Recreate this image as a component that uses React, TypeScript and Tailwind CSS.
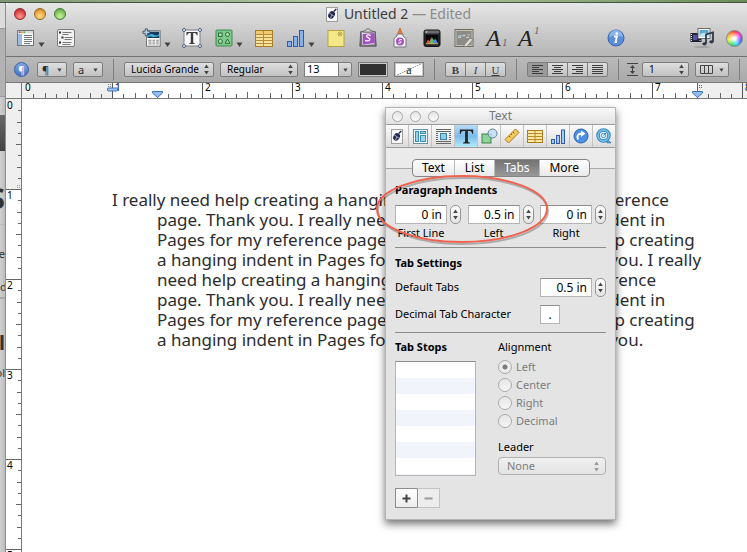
import { useState, type ReactNode } from 'react'
import clsx from 'clsx'

const LINES = [
  'I really need help creating a hanging indent in Pages for my reference',
  'page. Thank you. I really need help creating a hanging indent in',
  'Pages for my reference page. Thank you. I really need help creating',
  'a hanging indent in Pages for my reference page. Thank you. I really',
  'need help creating a hanging indent in Pages for my reference',
  'page. Thank you. I really need help creating a hanging indent in',
  'Pages for my reference page. Thank you. I really need help creating',
  'a hanging indent in Pages for my reference page. Thank you.',
]

// ---------------------------------------------------------------- icons

function PenIcon({ className }: { className?: string }) {
  return (
    <svg viewBox="0 0 14 17" className={className} aria-hidden="true">
      <rect x="0.5" y="0.5" width="13" height="16" fill="#fbfbfb" stroke="#8d8d8d" />
      <ellipse cx="6.5" cy="9" rx="3.6" ry="4.6" transform="rotate(32 6.5 9)" fill="#23284f" />
      <path d="M3 6l7 5M5 13l2-4" stroke="#c7cbe0" strokeWidth="0.9" />
      <path d="M9 5l3-3" stroke="#23284f" strokeWidth="1.6" />
    </svg>
  )
}

function ViewIcon() {
  return (
    <svg width="20" height="20" viewBox="0 0 20 20" aria-hidden="true">
      <rect x="1.5" y="2.5" width="16" height="15" fill="#fafafa" stroke="#6f757d" />
      <rect x="2" y="3" width="15" height="2.5" fill="#d9dbdd" />
      <circle cx="3.8" cy="4.2" r="0.9" fill="#d8352e" />
      <circle cx="6" cy="4.2" r="0.9" fill="#e39b29" />
      <circle cx="8.2" cy="4.2" r="0.9" fill="#4ba943" />
      <rect x="2" y="6" width="4" height="11" fill="#9dbbe3" />
      <path d="M8 7.5h8M8 9.5h8M8 11.5h8M8 13.5h8M8 15.5h6" stroke="#74777b" />
    </svg>
  )
}

function OutlineIcon() {
  return (
    <svg width="20" height="20" viewBox="0 0 20 20" aria-hidden="true">
      <rect x="1.5" y="1.5" width="17" height="17" rx="1.5" fill="#f1f1f1" stroke="#7c7c7c" />
      <path d="M6.5 4.5h9M6.5 6.5h6M8.5 9.5h8M8.5 11.5h7M6.5 14.5h9M6.5 16.5h8" stroke="#7a7a7a" />
      <path d="M3 4.5h2M5.5 9.5h2M3 14.5h2" stroke="#2e2e2e" strokeWidth="2" />
    </svg>
  )
}

function SectionIcon() {
  return (
    <svg width="22" height="22" viewBox="0 0 22 22" aria-hidden="true">
      <rect x="5" y="3" width="15" height="17" fill="#fcfcfc" stroke="#6d6d6d" />
      <rect x="6" y="4" width="13" height="7" fill="#123a5e" />
      <path d="M6 8.500q4-3 7-1t6-1v2q-5 2-8 1t-5 1z" fill="#46b5dd" />
      <path d="M7 13.500h3.500M11.500 13.500h3M15.500 13.500h3M7 15.500h3.500M11.500 15.500h3M15.500 15.500h3M7 17.500h3.500M11.500 17.500h3M15.500 17.500h3" stroke="#7b7b7b" />
      <path d="M3.500 1h2.500v2.500h2.500v2.500h-2.500v2.500h-2.500v-2.500h-2.500v-2.500h2.500z" fill="#b9cfe2" stroke="#40566b" />
    </svg>
  )
}

function TextBoxIcon() {
  return (
    <svg width="20" height="20" viewBox="0 0 20 20" aria-hidden="true">
      <rect x="2" y="2" width="16" height="16" fill="#f8f8f8" stroke="#777f8c" />
      <path d="M4.500 4h11v3.600h-.7q-.3-2.600-2-2.600h-1.600v9.300q0 .9 1.500.9v.8h-5.400v-.8q1.500 0 1.500-.9v-9.300h-1.600q-1.700 0-2 2.600h-.7z" fill="#3b3b3b" />
      {[2, 18].map((x) =>
        [2, 18].map((y) => <circle key={`${x}-${y}`} cx={x} cy={y} r="1.500" fill="#fff" stroke="#44567c" />),
      )}
    </svg>
  )
}

function ShapesIcon() {
  return (
    <svg width="20" height="20" viewBox="0 0 20 20" aria-hidden="true">
      <rect x="2" y="2" width="16" height="16" rx="1" fill="#7fc98a" stroke="#3f8a50" />
      <g fill="#a9dfae" stroke="#2f6b3e">
        <rect x="4.500" y="5" width="3.500" height="3.500" />
        <circle cx="13.500" cy="6.500" r="2" />
        <path d="M6.300 11l2.200 1.700-.8 2.600h-2.800l-.8-2.600z" />
        <path d="M13.500 11l2.300 4.300h-4.600z" />
      </g>
    </svg>
  )
}

function TableIcon() {
  return (
    <svg width="20" height="20" viewBox="0 0 20 20" aria-hidden="true">
      <rect x="1.500" y="2.500" width="17" height="16" fill="#f8e29a" stroke="#a97c23" />
      <rect x="2" y="3" width="16" height="3" fill="#eec970" />
      <path d="M1.500 6.500h17M1.500 9.500h17M1.500 12.500h17M1.500 15.500h17M9.500 2.500v16" stroke="#b58d3a" />
    </svg>
  )
}

function ChartIcon() {
  return (
    <svg width="20" height="20" viewBox="0 0 20 20" aria-hidden="true">
      <g fill="#86b1ea" stroke="#2c5cab">
        <rect x="1.500" y="13.500" width="4" height="5" />
        <rect x="7.500" y="8.500" width="4" height="10" />
        <rect x="13.500" y="2.500" width="4" height="16" />
      </g>
    </svg>
  )
}

function NoteIcon() {
  return (
    <svg width="20" height="20" viewBox="0 0 20 20" aria-hidden="true">
      <rect x="2" y="2.500" width="16" height="16" fill="#f4e987" stroke="#b3a43f" />
      <circle cx="14" cy="6" r="2" fill="#fbf5b5" stroke="#a5932c" strokeWidth="0.800" />
      <path d="M12.800 4.800l2.400 2.400M15.200 4.800l-2.400 2.400" stroke="#a5932c" strokeWidth="0.700" />
    </svg>
  )
}

function ClipboardIcon() {
  return (
    <svg width="22" height="22" viewBox="0 0 22 22" aria-hidden="true">
      <path d="M3 4h16l1 16h-18z" fill="#76747b" stroke="#55535a" />
      <path d="M4 5h14v13l-13 1z" fill="#e9e6ec" />
      <path d="M5 6.500l13-1 .5 11-13 2z" fill="#a452c2" />
      <path d="M14 8.500q-4-2-4.500.5c0 2 4 1.500 3.500 4q-1 2-5 .5" fill="none" stroke="#fff" strokeWidth="1.500" />
      <path d="M6 4.500v-1.500h2.500l1-2h3l1 2h2.500v1.500z" fill="#d9d9d9" stroke="#6c6c6c" />
    </svg>
  )
}

function GlueIcon() {
  return (
    <svg width="20" height="22" viewBox="0 0 20 22" aria-hidden="true">
      <path d="M10 1l2.300 6h-4.600z" fill="#ee8132" stroke="#b9560f" strokeWidth="0.700" />
      <path d="M7 7h6v2l3 2.500v8.500h-12v-8.500l3-2.500z" fill="#f3f1f5" stroke="#77747b" />
      <circle cx="10" cy="14.500" r="4" fill="#a452c2" />
      <path d="M12 12.800q-3-1.200-3 .4c0 1.300 2.400.9 2 2.400q-.6 1-3 .4" fill="none" stroke="#fff" />
    </svg>
  )
}

function AdjustIcon() {
  return (
    <svg width="20" height="20" viewBox="0 0 20 20" aria-hidden="true">
      <rect x="2" y="2" width="16" height="16.500" rx="2" fill="#26262a" stroke="#131315" />
      <rect x="2.500" y="2.500" width="15" height="3" rx="1.500" fill="#6b6b70" />
      <circle cx="4.500" cy="4" r="0.800" fill="#e5e5e5" />
      <rect x="4" y="7" width="12" height="9" fill="#08080a" />
      <path d="M4 15.500l2-4 1.500 2 2-5v7z" fill="#e2504b" />
      <path d="M7 15.500l3-6 2 3 1 3z" fill="#59c05c" />
      <path d="M10.500 15.500l2.500-5 1.500 2 1.500 3z" fill="#4f86e6" />
      <path d="M4 15.700h12" stroke="#f1d25c" strokeWidth="0.800" />
    </svg>
  )
}

function AlphaIcon() {
  return (
    <svg width="20" height="20" viewBox="0 0 20 20" className="shrink-0" aria-hidden="true">
      <rect x="1" y="1.500" width="18" height="17" fill="#8b8b88" stroke="#6f6d68" />
      <rect x="2" y="2.500" width="16" height="15" fill="none" stroke="#c4bda8" />
      <text x="4" y="10" fontFamily="Liberation Serif, serif" fontStyle="italic" fontSize="7" fill="#ececec">a+2</text>
      <path d="M10 17l6-7 3 1.500-6 7h-3z" fill="#dedcd2" stroke="#77756c" strokeWidth="0.800" />
    </svg>
  )
}

function InfoIcon() {
  return (
    <svg width="20" height="20" viewBox="0 0 20 20" aria-hidden="true">
      <circle cx="10" cy="10" r="8" fill="#5a8fd8" stroke="#3464ae" />
      <path d="M3 9a7 7 0 0 1 14 0q-7-3-14 0z" fill="#8db5ea" />
      <path d="M8 8.500h3l-1.500 5.500h1.500" fill="none" stroke="#fff" strokeWidth="1.800" />
      <circle cx="10.800" cy="5.600" r="1.300" fill="#fff" />
    </svg>
  )
}

function MediaIcon() {
  return (
    <svg width="24" height="20" viewBox="0 0 24 20" className="shrink-0" aria-hidden="true">
      <ellipse cx="12" cy="19" rx="9" ry="0.800" fill="#999" />
      <rect x="0.500" y="5" width="11" height="9" fill="#1f2433" />
      <path d="M1.500 6v8M10 6v8" stroke="#e4e4e4" strokeDasharray="1 1" />
      <rect x="3" y="7" width="4" height="5" fill="#5c50a8" />
      <rect x="8" y="0.500" width="12" height="10" fill="#fff" stroke="#6b6b6b" />
      <rect x="9.500" y="2" width="9" height="7" fill="#5aa9d2" />
      <path d="M9.500 7q4-4 9-1v3h-9z" fill="#c3e4ee" />
      <path d="M16 15.500v-9l7-2v9" fill="none" stroke="#30384a" strokeWidth="1.800" />
      <ellipse cx="14.500" cy="15.800" rx="2.200" ry="1.600" fill="#30384a" />
      <ellipse cx="21.500" cy="13.800" rx="2.200" ry="1.600" fill="#30384a" />
    </svg>
  )
}

function StyleA({ superscript = false }: { superscript?: boolean }) {
  return (
    <span className="relative block h-5 w-5 text-left font-['Liberation_Serif',serif] text-[24px] leading-5 text-[#222] italic">
      A
      <span className={clsx('absolute left-4 text-[11px] leading-3 text-[#666]', superscript ? '-top-1' : 'top-2')}>1</span>
    </span>
  )
}

function UpDown({ className }: { className?: string }) {
  return (
    <svg width="7" height="11" viewBox="0 0 7 11" className={className} aria-hidden="true">
      <path d="M3.500 0.500l2.300 3.500h-4.600zM3.500 10.500l2.300-3.500h-4.600z" fill="currentColor" />
    </svg>
  )
}

function Down({ className }: { className?: string }) {
  return (
    <svg width="7" height="5" viewBox="0 0 7 5" className={className} aria-hidden="true">
      <path d="M0.500 0.500h6l-3 4.500z" fill="currentColor" />
    </svg>
  )
}

// -------------------------------------------------------------- toolbar

interface ToolProps {
  label: string
  menu?: boolean
  children: ReactNode
}

function Tool({ label, menu = false, children }: ToolProps) {
  return (
    <button type="button" aria-label={label} className={clsx('flex h-6 shrink-0 items-center', menu ? 'w-10' : 'w-8')}>
      <span className="flex w-5 shrink-0 justify-center">{children}</span>
      {menu && <Down className="mt-3 ml-[2px] text-[#444]" />}
    </button>
  )
}

function TitleBar() {
  const lights = [
    'bg-[radial-gradient(circle_at_50%_75%,#ff9c94,#dc4343_60%,#a12727)] border-[#8f2a2a]',
    'bg-[radial-gradient(circle_at_50%_75%,#ffe08c,#e8a33c_60%,#b9741c)] border-[#96661f]',
    'bg-[radial-gradient(circle_at_50%_75%,#cdf3a0,#7fc25a_60%,#4b8a34)] border-[#4a7c36]',
  ]
  return (
    <div className="flex h-[22px] items-center pr-4 pl-2">
      <div className="flex gap-2">
        {lights.map((light, i) => (
          <button key={i} type="button" aria-label={['Close', 'Minimize', 'Zoom'][i]} className={clsx('h-3 w-3 rounded-full border', light)} />
        ))}
      </div>
      <h1 className="flex flex-1 items-center justify-center gap-[6px] text-[14px] leading-5 text-[#3c3c3c]">
        <PenIcon className="h-[15px] w-3" />
        <span>
          Untitled 2 <span className="text-[#8b8b8b]">— Edited</span>
        </span>
      </h1>
    </div>
  )
}

function Toolbar() {
  return (
    <div className="flex h-[31px] items-center overflow-hidden pb-[5px] pl-[10px]">
      <Tool label="View" menu><ViewIcon /></Tool>
      <Tool label="Outline"><OutlineIcon /></Tool>
      <div className="ml-[54px] flex">
        <Tool label="Sections" menu><SectionIcon /></Tool>
        <Tool label="Text Box"><TextBoxIcon /></Tool>
        <Tool label="Shapes" menu><ShapesIcon /></Tool>
        <Tool label="Table"><TableIcon /></Tool>
        <Tool label="Charts" menu><ChartIcon /></Tool>
        <Tool label="Comment"><NoteIcon /></Tool>
        <Tool label="Copy Style"><ClipboardIcon /></Tool>
        <Tool label="Paste Style"><GlueIcon /></Tool>
        <Tool label="Adjust Image"><AdjustIcon /></Tool>
        <Tool label="Alpha"><AlphaIcon /></Tool>
        <Tool label="Subscript"><StyleA /></Tool>
        <Tool label="Superscript"><StyleA superscript /></Tool>
      </div>
      <div className="ml-14 flex">
        <Tool label="Inspector"><InfoIcon /></Tool>
      </div>
      <div className="ml-[54px] flex">
        <Tool label="Media"><MediaIcon /></Tool>
        <Tool label="Colors">
          <span className="block h-[17px] w-[17px] rounded-full border border-[#888] bg-[radial-gradient(circle,#ffffff_10%,transparent_65%),conic-gradient(#ff3b30,#ff2bd6,#5a4bff,#22c8ff,#2fe05a,#e8f23a,#ff9a2b,#ff3b30)]" />
        </Tool>
      </div>
    </div>
  )
}

const CONTROL = 'h-[15px] shrink-0 rounded-[2px] border border-[#7d7d7d] bg-linear-to-b from-[#dedede] to-[#c2c2c2]'

interface BarSelectProps {
  label: string
  value: string
  width: string
}

function BarSelect({ label, value, width }: BarSelectProps) {
  return (
    <div className={clsx('relative shrink-0', width)}>
      <select aria-label={label} className={clsx(CONTROL, 'block w-full appearance-none pl-[6px] text-[10px] leading-[13px] text-black')}>
        <option>{value}</option>
      </select>
      <UpDown className="pointer-events-none absolute top-[2px] right-1 text-[#444]" />
    </div>
  )
}

function Separator() {
  return <span className="mx-1 h-[21px] w-px shrink-0 bg-[#7f7f7f]" />
}

function AlignLines({ kind }: { kind: string }) {
  const paths: Record<string, string> = {
    Left: 'M0 .5h11M0 2.500h7M0 4.500h11M0 6.500h7M0 8.500h11',
    Center: 'M0 .5h11M2 2.500h7M0 4.500h11M2 6.500h7M0 8.500h11',
    Right: 'M0 .5h11M4 2.500h7M0 4.500h11M4 6.500h7M0 8.500h11',
    Justify: 'M0 .5h11M0 2.500h11M0 4.500h11M0 6.500h11M0 8.500h11',
  }
  return (
    <svg width="11" height="9" viewBox="0 0 11 9" aria-hidden="true">
      <path d={paths[kind]} stroke="#3d3d3d" />
    </svg>
  )
}

function FormatBar() {
  return (
    <div className="flex h-[26px] items-center gap-[6px] overflow-hidden border-t border-[#717171] bg-linear-to-b from-[#b9b9b9] to-[#a9a9a9] pl-2">
      <button type="button" aria-label="Styles drawer" className="mr-[2px] h-[15px] w-[15px] shrink-0 rounded-full border border-[#3a5fa3] bg-linear-to-b from-[#7fa6e0] to-[#4474c8] text-[10px] leading-3 text-white">
        ¶
      </button>
      {['¶', 'a'].map((glyph) => (
        <button key={glyph} type="button" className={clsx(CONTROL, 'flex w-[30px] items-center justify-between px-1 text-[11px] leading-3 text-[#2d2d2d]')}>
          {glyph}
          <Down className="h-1 w-[5px] text-[#444]" />
        </button>
      ))}
      <Separator />
      <BarSelect label="Font" value="Lucida Grande" width="w-[90px]" />
      <BarSelect label="Typeface" value="Regular" width="w-[78px]" />
      <div className="flex shrink-0">
        <input aria-label="Font size" defaultValue="13" className="h-[15px] w-[35px] border border-[#7d7d7d] bg-white px-[2px] text-[11px] text-black" />
        <button type="button" aria-label="Font sizes" className={clsx(CONTROL, '-ml-px flex w-[14px] items-center justify-center rounded-l-none')}>
          <Down className="h-1 w-[5px] text-[#444]" />
        </button>
      </div>
      <button type="button" aria-label="Text colour" className="h-[15px] w-[30px] shrink-0 border border-[#7d7d7d] bg-[#303030] outline-1 -outline-offset-2 outline-[#c9c9c9]" />
      <button type="button" aria-label="Text background" className="h-[15px] w-[30px] shrink-0 border border-[#7d7d7d] bg-[linear-gradient(155deg,#fff_48%,#999_49%,#999_51%,#fff_52%)] font-['Liberation_Serif',serif] text-[12px] leading-3 text-[#222] outline-1 -outline-offset-2 outline-[#c9c9c9]">
        a
      </button>
      <Separator />
      <div className="flex shrink-0 font-['Liberation_Serif',serif] text-[11px] leading-3 text-[#3d3d3d]">
        <button type="button" className={clsx(CONTROL, 'w-[21px] rounded-r-none font-bold')}>B</button>
        <button type="button" className={clsx(CONTROL, '-ml-px w-[21px] rounded-none italic')}>I</button>
        <button type="button" className={clsx(CONTROL, '-ml-px w-[21px] rounded-l-none underline')}>U</button>
      </div>
      <Separator />
      <div className="flex shrink-0">
        {['Left', 'Center', 'Right', 'Justify'].map((kind) => (
          <button
            key={kind}
            type="button"
            aria-label={`Align ${kind}`}
            className={clsx('-ml-px flex h-[15px] w-[21px] items-center justify-center border border-[#7d7d7d] first:ml-0 first:rounded-l-[2px] last:rounded-r-[2px]', kind === 'Left' ? 'bg-[#9a9a9a]' : 'bg-linear-to-b from-[#dedede] to-[#c2c2c2]')}
          >
            <AlignLines kind={kind} />
          </button>
        ))}
      </div>
      <Separator />
      <svg width="11" height="13" viewBox="0 0 11 13" className="-mx-[2px] shrink-0" aria-hidden="true">
        <path d="M0 .5h11M0 12.500h11M5.500 3v7" stroke="#444" />
        <path d="M5.500 2l2.500 3h-5zM5.500 11l2.500-3h-5z" fill="#444" />
      </svg>
      <BarSelect label="Line spacing" value="1" width="w-[47px]" />
      <button type="button" aria-label="Columns" className={clsx(CONTROL, 'flex w-[34px] items-center justify-between px-1')}>
        <svg width="13" height="9" viewBox="0 0 13 9" aria-hidden="true">
          <path d="M.5.5h12v8h-12zM4.500.5v8M8.500.5v8" fill="none" stroke="#444" />
        </svg>
        <Down className="h-1 w-[5px] text-[#444]" />
      </button>
      <Separator />
    </div>
  )
}

// --------------------------------------------------------------- rulers

const TICKS = [4, 5, 4, 6, 4, 5, 4]

function HorizontalRuler() {
  return (
    <div className="flex h-[17px] border-t border-b border-[#777] bg-[#efefef]">
      <div className="w-4 shrink-0 border-r border-[#777]" />
      <div className="relative flex min-w-0 flex-1 overflow-hidden bg-[linear-gradient(to_right,#efefef_90px,#fff_90px,#fff_675px,#efefef_675px)]">
        {Array.from({ length: 16 }, (_, inch) => (
          <div key={inch} className="relative h-[15px] w-[90px] shrink-0 text-[10px] leading-[9px] text-black">
            <svg width="90" height="15" className="absolute" aria-hidden="true">
              {inch > 0 && <path d="M.5 0v15" stroke="#555" />}
              {TICKS.map((h, i) => (
                <path key={i} d={`M${Math.round((i + 1) * 11.25) + 0.5} 15v-${h}`} stroke="#666" />
              ))}
            </svg>
            <span className="absolute top-0 left-[3px]">{inch}</span>
          </div>
        ))}
        <svg width="14" height="11" viewBox="0 0 14 11" className="absolute top-px left-[84px]" aria-hidden="true">
          <path d="M2 .5h1M4 .5h1M2 2.500h1M4 2.500h1" stroke="#888" />
          <rect x="1.500" y="4" width="10" height="3" rx="1" fill="#9cc6f2" stroke="#3e74b5" />
        </svg>
        {['left-[130px]', 'left-[670px]'].map((left) => (
          <svg key={left} width="11" height="15" viewBox="0 0 11 15" className={clsx('absolute top-0', left)} aria-hidden="true">
            {left === 'left-[670px]' && <path d="M5.500 0v9M7 2.500h1M9 2.500h1M7 4.500h1M9 4.500h1" stroke="#666" />}
            <path d="M.5 8.500h10v1.500l-5 4.500-5-4.500z" fill="#8fbdf0" stroke="#3e74b5" />
          </svg>
        ))}
      </div>
    </div>
  )
}

function VerticalRuler() {
  return (
    <div className="w-4 shrink-0 overflow-hidden border-r border-[#777] bg-[linear-gradient(#efefef_90px,#fff_90px)]">
      {Array.from({ length: 12 }, (_, inch) => (
        <div key={inch} className="relative h-[90px] text-[10px] leading-[9px] text-black">
          <svg width="15" height="90" className="absolute" aria-hidden="true">
            {inch > 0 && <path d="M0 .5h15" stroke="#666" />}
            {TICKS.map((w, i) => (
              <path key={i} d={`M15 ${Math.round((i + 1) * 11.25) + 0.5}h-${w - 1}`} stroke="#666" />
            ))}
            {inch === 0 && <path d="M11 86.500h1M13 86.500h1M11 88.500h1M13 88.500h1" stroke="#999" />}
          </svg>
          <span className="absolute top-[2px] left-px">{inch}</span>
        </div>
      ))}
    </div>
  )
}

// ------------------------------------------------------------ inspector

const INSPECTOR_ICONS: { label: string; icon: ReactNode }[] = [
  { label: 'Document', icon: <PenIcon className="h-[15px] w-3" /> },
  {
    label: 'Layout',
    icon: (
      <svg width="15" height="15" viewBox="0 0 15 15">
        <rect x=".5" y=".5" width="14" height="14" fill="#f4fafd" stroke="#6e8ea3" />
        <g fill="#9ad3ef" stroke="#3c8db7">
          <rect x="2.500" y="2.500" width="3" height="10" />
          <rect x="7.500" y="2.500" width="5" height="2" />
          <rect x="7.500" y="6.500" width="5" height="6" />
        </g>
      </svg>
    ),
  },
  {
    label: 'Wrap',
    icon: (
      <svg width="15" height="15" viewBox="0 0 15 15">
        <path d="M0 .5h15M0 2.500h15M0 4.500h2M0 6.500h2M0 8.500h2M0 10.500h2M13 4.500h2M13 6.500h2M13 8.500h2M13 10.500h2M0 12.500h15M0 14.500h15" stroke="#666" />
        <rect x="4.500" y="4.500" width="6" height="6" fill="#8fcbe9" stroke="#3c7fa8" />
      </svg>
    ),
  },
  {
    label: 'Text',
    icon: (
      <svg width="15" height="15" viewBox="0 0 15 15">
        <path d="M.8.500h13.400v4.500h-.8q-.6-3-2.800-3h-1.700v10.300q0 1.300 2 1.300v.9h-6.800v-.9q2 0 2-1.300v-10.300h-1.700q-2.200 0-2.800 3h-.8z" fill="#252525" />
      </svg>
    ),
  },
  {
    label: 'Graphic',
    icon: (
      <svg width="17" height="16" viewBox="0 0 17 16">
        <rect x="1" y="6" width="9" height="9" fill="#8fd29a" stroke="#3b8349" />
        <circle cx="11.500" cy="5.500" r="4.500" fill="#c3dcef" fillOpacity=".85" stroke="#5c7f9b" />
      </svg>
    ),
  },
  {
    label: 'Metrics',
    icon: (
      <svg width="16" height="16" viewBox="0 0 16 16">
        <path d="M1 11.500l10.500-10.500 3.500 3.500-10.500 10.500z" fill="#f4cd5c" stroke="#a9791d" />
        <path d="M5 8l1.500 1.500M7 6l1 1M9 4l1.500 1.500" stroke="#8a6115" />
      </svg>
    ),
  },
  {
    label: 'Table',
    icon: (
      <svg width="16" height="15" viewBox="0 0 16 15">
        <rect x=".5" y="1.500" width="15" height="12" fill="#fae7a0" stroke="#a97c23" />
        <path d="M.5 4.500h15M.5 7.500h15M.5 10.500h15M8 1.500v12" stroke="#b58a30" />
      </svg>
    ),
  },
  {
    label: 'Chart',
    icon: (
      <svg width="15" height="15" viewBox="0 0 15 15">
        <g fill="#a9c9f1" stroke="#2c5cab">
          <rect x=".5" y="10.500" width="3" height="4" />
          <rect x="5.500" y="6.500" width="3" height="8" />
          <rect x="10.500" y="1" width="3" height="13.500" />
        </g>
      </svg>
    ),
  },
  {
    label: 'Link',
    icon: (
      <svg width="16" height="16" viewBox="0 0 16 16">
        <circle cx="8" cy="8" r="7" fill="#4d8fe0" stroke="#2a5fae" />
        <path d="M5 11.500q-2-5.500 3.500-6" fill="none" stroke="#fff" strokeWidth="2" />
        <path d="M8 2.500l4.500 3-4.500 3.500z" fill="#fff" />
      </svg>
    ),
  },
  {
    label: 'QuickTime',
    icon: (
      <svg width="16" height="16" viewBox="0 0 16 16">
        <path d="M9.500 9.500l5.500 5.300h-4z" fill="#5fb2e2" stroke="#357fb5" />
        <circle cx="7.500" cy="7.500" r="5.500" fill="#e4f4fb" stroke="#357fb5" strokeWidth="3.500" />
        <circle cx="7.500" cy="7.500" r="5.500" fill="none" stroke="#6dbbe8" strokeWidth="1.800" />
        <circle cx="7.500" cy="7.500" r="2.200" fill="none" stroke="#4795c9" />
        <path d="M7.500 7.500l3-3" stroke="#357fb5" />
      </svg>
    ),
  },
]

interface FieldProps {
  label: string
  value: string
  showLabel?: boolean
}

function MeasureField({ label, value, showLabel = false }: FieldProps) {
  return (
    <div className="flex items-start gap-[3px]">
      <label className="flex flex-col items-center text-[11px] leading-[18px] text-black">
        <input aria-label={label} defaultValue={value} className="h-[19px] w-[52px] border border-[#b5b5b5] border-t-[#8e8e8e] bg-white pr-1 text-right text-[12px] leading-4" />
        {showLabel && <span>{label}</span>}
      </label>
      <button type="button" aria-label={`Adjust ${label}`} className="flex h-[19px] w-[11px] items-center justify-center rounded-[5px] border border-[#959595] bg-linear-to-b from-white to-[#e3e3e3]">
        <UpDown className="text-[#444]" />
      </button>
    </div>
  )
}

const SECTION_TITLE = 'text-[11px] leading-4 font-bold text-black'

function Inspector() {
  const [tab, setTab] = useState('Tabs')
  const [alignment, setAlignment] = useState('Left')

  return (
    <section aria-label="Text inspector" className="absolute top-2 left-[363px] w-[231px] border border-[#b4b4b4] bg-[#ebebeb] text-black shadow-[0_4px_8px_rgba(0,0,0,0.55)]">
      <header className="relative flex h-4 items-center bg-linear-to-b from-[#f8f8f8] to-[#e2e2e2] pl-[6px]">
        <div className="flex gap-[7px]">
          {['Close', 'Minimize', 'Zoom'].map((name) => (
            <button key={name} type="button" aria-label={name} className="h-[11px] w-[11px] rounded-full border border-[#a5a5a5] bg-linear-to-b from-[#e4e4e4] to-[#fafafa]" />
          ))}
        </div>
        <h2 className="absolute inset-x-0 text-center text-[12px] leading-4 text-[#777]">Text</h2>
      </header>

      <nav className="flex h-6 border-y border-[#9b9b9b] bg-linear-to-b from-[#fbfbfb] via-[#ececec] to-[#dcdcdc]">
        {INSPECTOR_ICONS.map(({ label, icon }) => (
          <button
            key={label}
            type="button"
            aria-label={`${label} inspector`}
            className={clsx('flex min-w-0 flex-1 items-center justify-center border-l border-[#c3c3c3] first:border-l-0', label === 'Text' && 'bg-linear-to-b from-[#b9dcf5] via-[#7cbcec] to-[#b4ecfb]')}
          >
            {icon}
          </button>
        ))}
      </nav>

      <div className="relative flex justify-center pt-[11px]">
        <div className="absolute inset-x-0 top-5 border-t border-[#a9a9a9]" />
        <div className="absolute inset-x-0 top-[21px] bottom-0 bg-[#e4e4e4]" />
        <div className="relative flex h-[18px] w-[178px] overflow-hidden rounded-[4px] border border-[#858585] bg-linear-to-b from-white to-[#e9e9e9] text-[12px] leading-4">
          {['Text', 'List', 'Tabs', 'More'].map((name) => (
            <button
              key={name}
              type="button"
              onClick={() => setTab(name)}
              className={clsx('flex-auto border-l border-[#bbb] first:border-l-0', tab === name && 'bg-linear-to-b from-[#747474] to-[#989898] text-white')}
            >
              {name}
            </button>
          ))}
        </div>
      </div>

      <div className="bg-[#e4e4e4] px-[9px] pt-[5px] pb-[11px]">
        <h3 className={SECTION_TITLE}>Paragraph Indents</h3>
        <div className="mt-[7px] flex justify-between">
          <MeasureField label="First Line" value="0 in" showLabel />
          <MeasureField label="Left" value="0.5 in" showLabel />
          <MeasureField label="Right" value="0 in" showLabel />
        </div>
        <hr className="mt-[5px] border-[#8b8b8b]" />

        <h3 className={clsx(SECTION_TITLE, 'mt-[7px]')}>Tab Settings</h3>
        <div className="mt-[7px] flex items-center justify-between text-[11px]">
          <span>Default Tabs</span>
          <MeasureField label="Default Tabs" value="0.5 in" />
        </div>
        <div className="mt-2 flex items-center justify-between text-[11px]">
          <label htmlFor="decimal-char">Decimal Tab Character</label>
          <input id="decimal-char" defaultValue="." className="mr-[46px] h-[19px] w-5 border border-[#b5b5b5] border-t-[#8e8e8e] bg-white text-center text-[12px]" />
        </div>
        <hr className="mt-2 border-[#8b8b8b]" />

        <div className="mt-[6px] flex justify-between">
          <div>
            <h3 className={SECTION_TITLE}>Tab Stops</h3>
            <ul aria-label="Tab stops" className="mt-[6px] h-[115px] w-[81px] border border-[#b5b5b5] border-t-[#8e8e8e] bg-[repeating-linear-gradient(#fff_0_16px,#f1f5fb_16px_32px)]" />
            <div className="mt-3 flex">
              <button type="button" aria-label="Add tab stop" className="flex h-5 w-[23px] items-center justify-center border border-[#8d8d8d] bg-linear-to-b from-white to-[#ececec]">
                <svg width="9" height="9" viewBox="0 0 9 9"><path d="M4.500.5v8M.5 4.500h8" stroke="#444" strokeWidth="2" /></svg>
              </button>
              <button type="button" aria-label="Remove tab stop" disabled className="-ml-px flex h-5 w-[23px] items-center justify-center border border-[#c3c3c3] border-l-[#8d8d8d] bg-[#ededed]">
                <svg width="9" height="9" viewBox="0 0 9 9"><path d="M.5 4.500h8" stroke="#999" strokeWidth="2" /></svg>
              </button>
            </div>
          </div>

          <div className="w-[108px] text-[11px]">
            <fieldset>
              <legend className="mb-[3px] leading-4">Alignment</legend>
              {['Left', 'Center', 'Right', 'Decimal'].map((name) => (
                <label key={name} className="flex h-[18px] items-center gap-1 text-[#7d7d7d]">
                  <input
                    type="radio"
                    name="alignment"
                    checked={alignment === name}
                    onChange={() => setAlignment(name)}
                    className="h-[14px] w-[14px] appearance-none rounded-full border border-[#a9a9a9] bg-linear-to-b from-[#e6e6e6] to-[#f5f5f5] checked:bg-[radial-gradient(circle,#7d7d7d_2px,#ededed_3px)]"
                  />
                  {name}
                </label>
              ))}
            </fieldset>
            <label htmlFor="leader" className="mt-[9px] block leading-4">Leader</label>
            <div className="relative mt-[2px]">
              <select id="leader" disabled className="block h-[18px] w-full appearance-none rounded-[4px] border border-[#b1b1b1] bg-linear-to-b from-[#f0f0f0] to-[#e4e4e4] pl-2 text-[11px] leading-4 text-[#7d7d7d] opacity-100">
                <option>None</option>
              </select>
              <UpDown className="pointer-events-none absolute top-1 right-[6px] text-[#999]" />
            </div>
          </div>
        </div>
      </div>
    </section>
  )
}

// ----------------------------------------------------------- background

function BackgroundWindow() {
  return (
    <aside aria-hidden="true" className="flex w-[6px] shrink-0 flex-col items-end overflow-hidden border-r border-[#8d8d8d] bg-linear-to-r from-[#d0d0d0] to-[#bcbcbc] text-[#333]">
      <div className="h-[25px] w-full shrink-0 bg-[#dcdcdc]" />
      <div className="h-[69px] w-full shrink-0 border-y border-[#999] bg-[#b2b2b2]" />
      <div className="h-[18px] w-full shrink-0" />
      <div className="h-9 w-full shrink-0 bg-linear-to-b from-[#696969] to-[#444]" />
      <div className="flex h-[74px] w-full shrink-0 items-center justify-end border-b border-[#bbb] pt-5 text-[28px] font-bold">S</div>
      <div className="h-[38px] shrink-0 pt-5 text-[11px] leading-[18px]">ne</div>
      <div className="h-9 w-full shrink-0 border-b-2 border-[#aaa] pt-4 text-[11px] leading-4">d</div>
      <div className="flex h-[66px] shrink-0 items-end pb-3 text-[20px] leading-5 font-bold">l</div>
      <div className="h-[54px] shrink-0 text-[11px] leading-4">ol</div>
    </aside>
  )
}

export default function App() {
  return (
    <div className="flex h-screen flex-col overflow-hidden bg-white font-['Noto_Sans',sans-serif]">
      <div className="h-[3px] shrink-0 border-b border-[#44523f] bg-linear-to-r from-[#7d9474] via-[#b9cfa6] to-[#6c8a58]" />
      <div className="flex min-h-0 flex-1">
        <BackgroundWindow />
        <div className="flex min-w-0 flex-1 flex-col">
          <div className="rounded-tl-[4px] bg-linear-to-b from-[#e6e6e6] to-[#b5b5b5]">
            <TitleBar />
            <Toolbar />
          </div>
          <FormatBar />
          <HorizontalRuler />
          <div className="flex min-h-0 flex-1">
            <VerticalRuler />
            <main className="relative min-w-0 flex-1 overflow-hidden bg-white">
              <p className="pt-[91px] pl-[135px] -indent-[45px] text-[17px] leading-5 whitespace-nowrap text-[#2c2c2e]">
                {LINES.map((line, i) => (
                  <span key={i}>
                    {line}
                    <br />
                  </span>
                ))}
              </p>
              <Inspector />
              <svg width="178" height="76" viewBox="0 0 178 76" className="pointer-events-none absolute top-[73px] left-[352px]" aria-hidden="true">
                <ellipse cx="89" cy="39" rx="85" ry="33" fill="none" stroke="#000" strokeOpacity=".25" strokeWidth="2" />
                <ellipse cx="88" cy="37" rx="85" ry="33" fill="none" stroke="#f0614f" strokeWidth="2" />
              </svg>
            </main>
          </div>
        </div>
      </div>
    </div>
  )
}
